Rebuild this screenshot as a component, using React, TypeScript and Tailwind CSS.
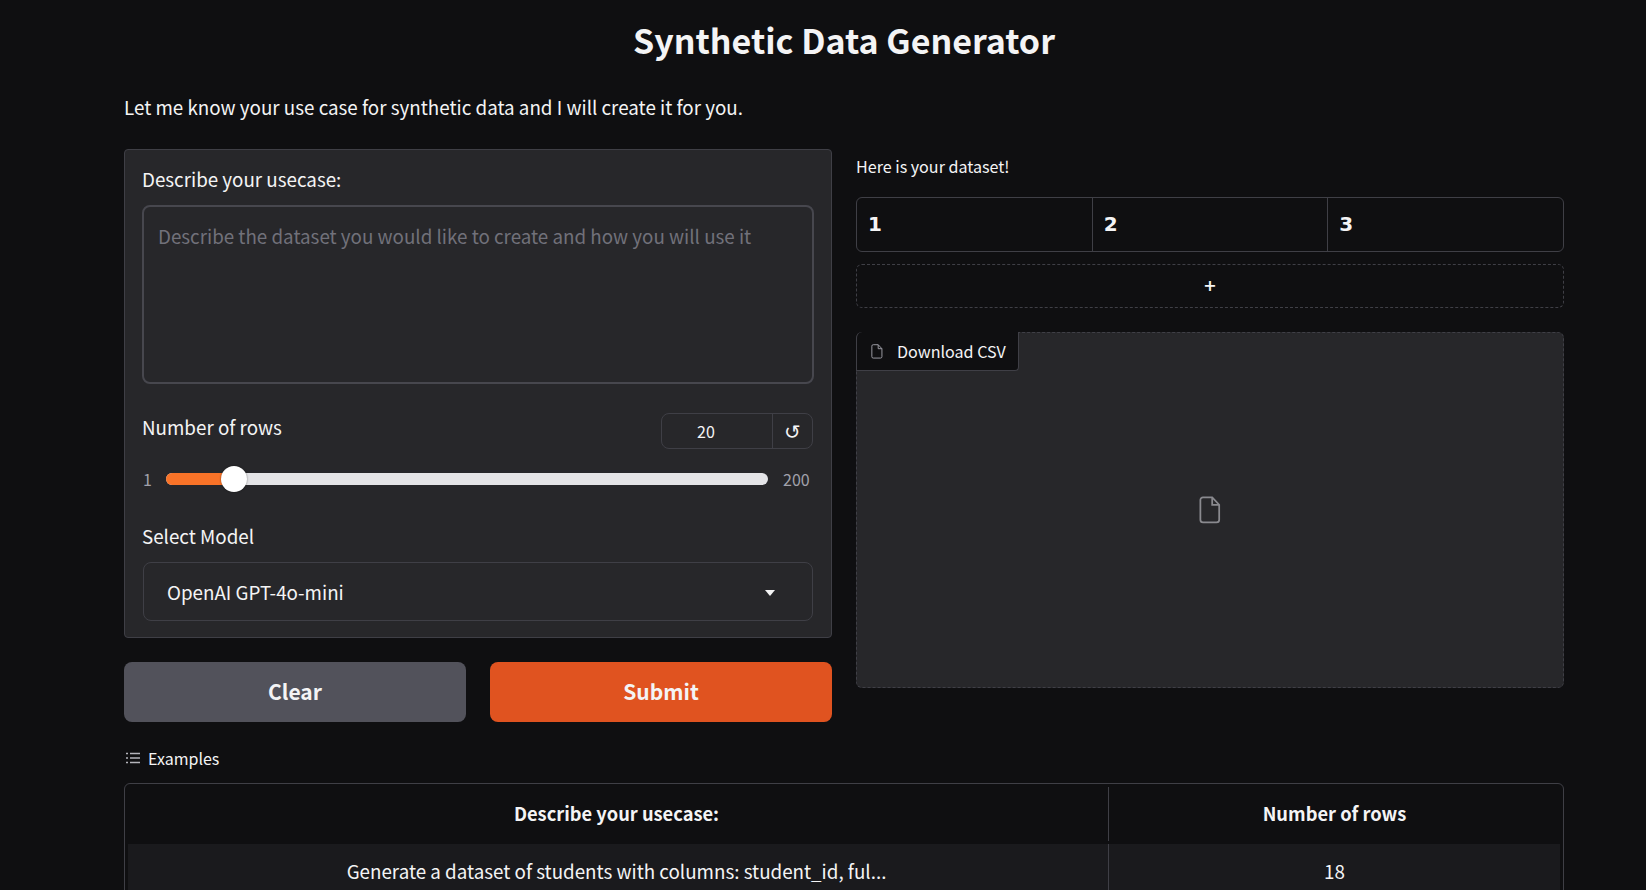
import React from 'react';

const FileIcon = ({ className }: { className: string }) => (
  <svg viewBox="0 0 24 32" fill="none" stroke="currentColor" strokeWidth="2" className={className}>
    <path d="M4 1.5h10.5l8 8.5v17a3 3 0 0 1-3 3H4a3 3 0 0 1-3-3V4.500a3 3 0 0 1 3-3z" />
    <path d="M14.500 1.500V10h8" />
  </svg>
);

const ListIcon = () => (
  <svg viewBox="0 0 14 12" fill="none" stroke="currentColor" strokeWidth="1.300" className="w-[14px] h-[12px] text-[#b4b4bb]">
    <path d="M4 1.500h10M4 6h10M4 10.500h10" />
    <path d="M0 1.500h2M0 6h2M0 10.500h2" />
  </svg>
);

export default function App() {
  return (
    <div className="h-[890px] overflow-hidden bg-[#0f0f11] text-[#f4f4f5] font-['Noto_Sans_CJK_SC','Source_Sans_Pro',sans-serif]">
      <div className="w-[1440px] ml-[124px]">
        <h1 className="h-[78px] flex items-center justify-center text-[34px] font-semibold">Synthetic Data Generator</h1>

        <p className="h-[34px] mt-[12px] flex items-center text-[18.800px]">Let me know your use case for synthetic data and I will create it for you.</p>

        <div className="flex gap-6 mt-[25px]">
          {/* Left column */}
          <div className="w-[708px] flex flex-col">
            <div className="h-[489px] bg-[#27272a] border border-[#3f3f46] rounded-[4px] px-[17px] flex flex-col">
              <label className="h-[24px] mt-[17px] flex items-center text-[18.800px]">Describe your usecase:</label>
              <div className="h-[179px] mt-[14px] border-2 border-[#47474e] rounded-[8px] px-[14px] py-[15px] text-[18.800px] leading-[28px] text-[#71717a]">
                Describe the dataset you would like to create and how you will use it
              </div>

              <div className="flex justify-between mt-[29px]">
                <span className="text-[18.800px] leading-[28px]">Number of rows</span>
                <div className="w-[152px] h-[36px] flex border border-[#3f3f46] rounded-[8px] mr-[1px]">
                  <span className="flex-1 flex items-center justify-center text-[16px] pr-[22px]">20</span>
                  <span className="w-[40px] border-l border-[#3f3f46] flex items-center justify-center text-[20px]">↺</span>
                </div>
              </div>

              <div className="flex items-center mt-[18px] ml-[1px] text-[16px] text-[#a1a1aa]">
                <span className="w-[23px]">1</span>
                <div className="relative w-[602px] h-[12px] rounded-full bg-[#e4e4e7]">
                  <div className="w-[68px] h-full rounded-l-full bg-[#f97328]" />
                  <div className="absolute left-[55px] top-[-7px] w-[26px] h-[26px] rounded-full bg-white shadow-[0_0_2px_rgba(0,0,0,0.5)]" />
                </div>
                <span className="ml-[15px]">200</span>
              </div>

              <label className="h-[24px] mt-[33px] flex items-center text-[18.800px]">Select Model</label>
              <div className="h-[59px] mt-[14px] mx-[1px] border border-[#3f3f46] rounded-[8px] pl-[23px] pr-[37px] pt-[2px] flex items-center justify-between text-[18.800px]">
                <span>OpenAI GPT-4o-mini</span>
                <span className="w-0 h-0 border-x-[5px] border-x-transparent border-t-[6px] border-t-[#f4f4f5]" />
              </div>
            </div>

            <div className="flex gap-6 mt-[24px]">
              <button className="flex-1 h-[60px] rounded-[8px] bg-[#52525b] text-[21px] font-semibold">Clear</button>
              <button className="flex-1 h-[60px] rounded-[8px] bg-[#e05320] text-[21px] font-semibold">Submit</button>
            </div>
          </div>

          {/* Right column */}
          <div className="flex-1 flex flex-col">
            <p className="h-[24px] mt-[5px] flex items-center text-[16.100px]">Here is your dataset!</p>
            <div className="h-[55px] mt-[19px] flex border border-[#3f3f46] rounded-[6px] font-['DejaVu_Sans',sans-serif] text-[20px] font-bold">
              <div className="flex-1 flex items-center pl-[11px] pb-[2px] border-r border-[#3f3f46]">1</div>
              <div className="flex-1 flex items-center pl-[11px] pb-[2px] border-r border-[#3f3f46]">2</div>
              <div className="flex-1 flex items-center pl-[11px] pb-[2px]">3</div>
            </div>
            <div className="h-[44px] mt-[12px] flex items-center justify-center border border-dashed border-[#3f3f46] rounded-[6px] font-['DejaVu_Sans',sans-serif] text-[16px] font-bold">+</div>
            <div className="relative h-[356px] mt-[24px] flex items-center justify-center bg-[#27272a] border border-dashed border-[#3f3f46] rounded-[6px]">
              <div className="absolute left-[-1px] top-[-1px] h-[39px] w-[163px] pl-[14px] flex items-center gap-[14px] bg-[#0f0f11] border border-t-0 border-[#3f3f46] rounded-br-[4px] rounded-tl-[6px] text-[16.100px] whitespace-nowrap">
                <FileIcon className="w-[12px] h-[15px] text-[#a1a1aa]" />
                <span>Download CSV</span>
              </div>
              <FileIcon className="w-[22px] h-[28px] text-[#8a8a8f]" />
            </div>
          </div>
        </div>

        {/* Examples */}
        <div className="flex items-center gap-2 mt-[24px] h-[24px] pl-[2px] text-[16px]">
          <ListIcon />
          <span>Examples</span>
        </div>
        <div className="mt-[13px] h-[200px] border border-[#3f3f46] rounded-[6px] px-[3px] pt-[3px]">
          <div className="flex h-[57px] text-[18.300px] font-semibold">
            <div className="w-[981px] flex items-center justify-center border-r border-[#3f3f46] mb-[3px] pr-[3px]">Describe your usecase:</div>
            <div className="flex-1 flex items-center justify-center mb-[3px]">Number of rows</div>
          </div>
          <div className="flex h-[56px] text-[18.800px] bg-[#1a1a1d]">
            <div className="w-[981px] flex items-center justify-center border-r border-[#3f3f46] pb-[2px] pr-[3px]">Generate a dataset of students with columns: student_id, ful...</div>
            <div className="flex-1 flex items-center justify-center pb-[2px]">18</div>
          </div>
        </div>
      </div>
    </div>
  );
}
